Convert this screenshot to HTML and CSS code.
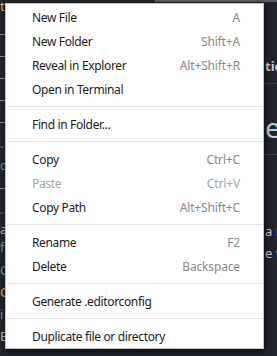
FILE: index.html
```html
<!DOCTYPE html>
<html lang="en">
  <head>
    <meta charset="UTF-8" />
    <meta name="viewport" content="width=device-width, initial-scale=1.0" />
    <title>Explorer context menu</title>
    <link rel="stylesheet" href="styles.css">
  </head>
  <body>
    <div class="workbench">
      <!-- explorer tree, mostly hidden behind the menu -->
      <div class="explorer">
        <div class="tree-row top">ts</div>
        <div class="tree-row"><span class="guide"></span></div>
        <div class="tree-row"><span class="guide"></span></div>
        <div class="tree-row"><span class="guide"></span></div>
        <div class="tree-row"><span class="guide"></span></div>
        <div class="tree-row"><span class="guide"></span></div>
        <div class="tree-row blue">.</div>
        <div class="tree-row blue">c</div>
        <div class="tree-row"><span class="guide"></span></div>
        <div class="tree-row blue">.</div>
        <div class="tree-row short gray">a</div>
        <div class="tree-row tall blue">f</div>
        <div class="tree-row blue">C</div>
        <div class="tree-row orange">C</div>
        <div class="tree-row blue">i</div>
        <div class="tree-row gray">E</div>
      </div>

      <!-- editor, only the right edge shows -->
      <div class="editor">
        <div class="topbar"></div>
        <div class="heading">tions</div>
        <div class="rule"></div>
        <div class="title">e</div>
        <div class="rule"></div>
        <div class="para first">a n</div>
        <div class="para">e t</div>
      </div>
    </div>

    <div class="context-menu">
      <div class="menu-item"><span class="label">New File</span><span class="keys">A</span></div>
      <div class="menu-item"><span class="label">New Folder</span><span class="keys">Shift+A</span></div>
      <div class="menu-item"><span class="label">Reveal in Explorer</span><span class="keys">Alt+Shift+R</span></div>
      <div class="menu-item"><span class="label">Open in Terminal</span></div>
      <div class="separator"></div>
      <div class="menu-item"><span class="label">Find in Folder...</span></div>
      <div class="separator"></div>
      <div class="menu-item"><span class="label">Copy</span><span class="keys">Ctrl+C</span></div>
      <div class="menu-item disabled"><span class="label">Paste</span><span class="keys">Ctrl+V</span></div>
      <div class="menu-item"><span class="label">Copy Path</span><span class="keys">Alt+Shift+C</span></div>
      <div class="separator"></div>
      <div class="menu-item"><span class="label">Rename</span><span class="keys">F2</span></div>
      <div class="menu-item"><span class="label">Delete</span><span class="keys">Backspace</span></div>
      <div class="separator"></div>
      <div class="menu-item"><span class="label">Generate .editorconfig</span></div>
      <div class="separator"></div>
      <div class="menu-item"><span class="label">Duplicate file or directory</span></div>
    </div>
  </body>
</html>
```

FILE: styles.css
```css
/* Dark workbench behind the light context menu */
body {
  margin: 0;
  width: 277px;
  height: 356px;
  overflow: hidden;
  position: relative;
  background: #21242b;
  font-family: "Noto Sans", "Open Sans", sans-serif;
  color: #cccccc;
}

.workbench {
  display: flex;
  height: 100%;
}

.explorer {
  width: 5px;
  overflow: hidden;
  display: flex;
  flex-direction: column;
  font-size: 13px;
}

.tree-row {
  flex: none;
  height: 22px;
  line-height: 22px;
  white-space: nowrap;
}

.tree-row.top {
  line-height: 12px;
  color: #d7ba7d;
}

.tree-row.short {
  height: 18px;
  line-height: 18px;
}

.tree-row.tall {
  height: 21px;
  line-height: 18px;
}

.guide {
  display: inline-block;
  width: 5px;
  height: 1px;
  background: #8a8a8a;
  vertical-align: middle;
}

.blue { color: #519aba; }
.orange { color: #e8a33d; }
.gray { color: #bbbbbb; }

.editor {
  flex: 1;
  overflow: hidden;
  display: flex;
  flex-direction: column;
  padding-left: 260px;
  white-space: nowrap;
}

.topbar {
  height: 2px;
  margin-left: -110px;
  background: #5a5d63;
}

.heading {
  margin-top: 55px;
  font-weight: bold;
  font-size: 13px;
  line-height: 18px;
}

.rule {
  height: 1px;
  margin-top: 8px;
  margin-left: -30px;
  background: #3c3f46;
}

.title {
  margin-top: 28px;
  font-size: 28px;
  line-height: 30px;
}

.title + .rule {
  margin-top: 12px;
}

.para {
  font-size: 13px;
  line-height: 22px;
}

.para.first {
  margin-top: 65px;
}

/* Context menu */
.context-menu {
  position: absolute;
  left: 5px;
  top: 3px;
  width: 257px;
  padding: 1px 0 0;
  background: #ffffff;
  border: 1px solid #c5c5c5;
  box-shadow: 1px 2px 6px rgba(0, 0, 0, 0.7);
  color: #1b1b1b;
  font-size: 12px;
}

.menu-item {
  display: flex;
  align-items: center;
  justify-content: space-between;
  height: 24px;
  padding: 0 23px 0 26px;
}

.label {
  letter-spacing: -0.35px;
}

.keys {
  color: #888888;
  letter-spacing: -0.15px;
}

.disabled .label,
.disabled .keys {
  color: #a5a5a5;
}

.separator {
  height: 1px;
  margin: 5px 0 5px 1px;
  background: #e4e4e4;
}
```
